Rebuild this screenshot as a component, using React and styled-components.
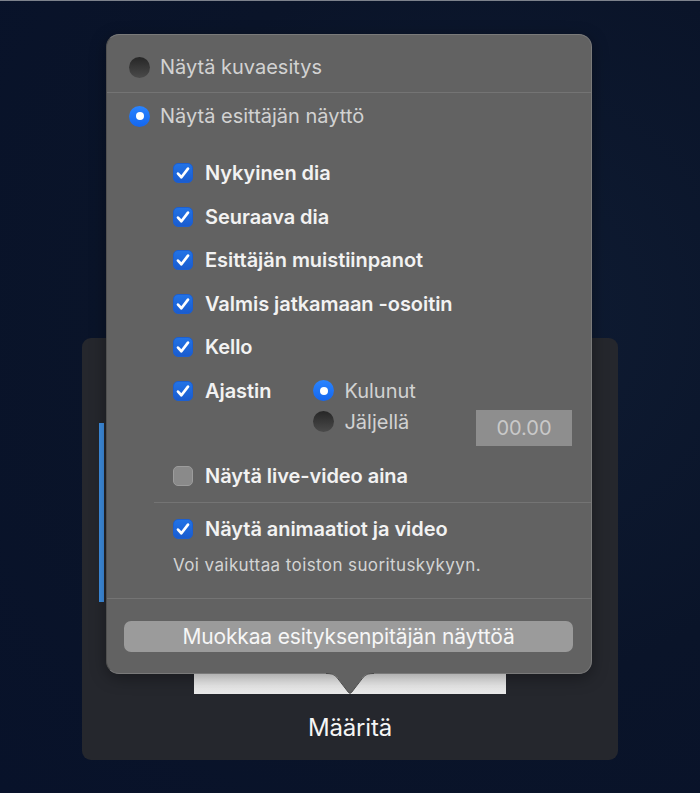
import React from "react";
import styled, { createGlobalStyle } from "styled-components";

const GlobalStyle = createGlobalStyle`
  html, body {
    margin: 0;
    padding: 0;
  }
  body {
    background: #0a1428;
    font-family: "Inter", "Liberation Sans", sans-serif;
  }
`;

const checks = [
  "Nykyinen dia",
  "Seuraava dia",
  "Esittäjän muistiinpanot",
  "Valmis jatkamaan -osoitin",
  "Kello",
];

function Radio({ on }) {
  return <RadioDot $on={on} />;
}

function Check({ on }) {
  return (
    <CheckBox $on={on}>
      {on && (
        <svg width="16" height="16" viewBox="0 0 16 16">
          <path
            d="M3 8.6 L6.4 12.2 L13 3.6"
            fill="none"
            stroke="#fff"
            strokeWidth="2.7"
            strokeLinecap="round"
            strokeLinejoin="round"
          />
        </svg>
      )}
    </CheckBox>
  );
}

function App() {
  return (
    <>
      <GlobalStyle />
      <Page>
        <BackCard>
          <Sidebar>
            <SelectBar />
          </Sidebar>
          <CardMain>
            <Thumb />
            <CardLabel>Määritä</CardLabel>
          </CardMain>
          <Sidebar />
        </BackCard>

        <Popover>
          <TopSection>
            <RadioRow>
              <Radio />
              <RadioLabel>Näytä kuvaesitys</RadioLabel>
            </RadioRow>
          </TopSection>
          <Divider />
          <PresenterSection>
            <RadioRow>
              <Radio on />
              <RadioLabel>Näytä esittäjän näyttö</RadioLabel>
            </RadioRow>
            <CheckList>
              {checks.map((label) => (
                <CheckRow key={label}>
                  <Check on />
                  <CheckLabel>{label}</CheckLabel>
                </CheckRow>
              ))}
              <TimerRow>
                <CheckRow>
                  <Check on />
                  <CheckLabel>Ajastin</CheckLabel>
                </CheckRow>
                <TimerChoices>
                  <RadioRow>
                    <Radio on />
                    <RadioLabel>Kulunut</RadioLabel>
                  </RadioRow>
                  <RadioRow>
                    <Radio />
                    <RadioLabel>Jäljellä</RadioLabel>
                  </RadioRow>
                </TimerChoices>
                <TimeField>00.00</TimeField>
              </TimerRow>
              <CheckRow>
                <Check />
                <CheckLabel>Näytä live-video aina</CheckLabel>
              </CheckRow>
            </CheckList>
          </PresenterSection>
          <InsetDivider />
          <AnimSection>
            <CheckRow>
              <Check on />
              <CheckLabel>Näytä animaatiot ja video</CheckLabel>
            </CheckRow>
            <Note>Voi vaikuttaa toiston suorituskykyyn.</Note>
          </AnimSection>
          <Divider />
          <Footer>
            <EditButton>Muokkaa esityksenpitäjän näyttöä</EditButton>
          </Footer>
          <Arrow width="48" height="21" viewBox="0 0 48 21">
            <path
              d="M0 0 C6 0 8 1 11 4 L22.5 19.5 C23.3 20.5 24.7 20.5 25.5 19.5 L37 4 C40 1 42 0 48 0 Z"
              fill="#626262"
            />
            <path
              d="M0 0.5 C6 0.5 8 1.5 11 4.5 L22.5 19.5 C23.3 20.5 24.7 20.5 25.5 19.5 L37 4.5 C40 1.5 42 0.5 48 0.5"
              fill="none"
              stroke="#4a4a4a"
              strokeWidth="1"
            />
          </Arrow>
        </Popover>
      </Page>
    </>
  );
}

const Page = styled.div`
  position: relative;
  width: 700px;
  height: 793px;
  overflow: hidden;
  box-sizing: border-box;
  border-top: 1px solid #7d828c;
  padding: 337px 82px 0;
  background: radial-gradient(
      ellipse at 70% 40%,
      #0f1c33 0%,
      #0a1429 55%,
      #08122a 100%
    );
`;

const BackCard = styled.div`
  display: flex;
  width: 536px;
  height: 422px;
  border-radius: 9px;
  background: #25272d;
`;

const Sidebar = styled.div`
  width: 22px;
  padding: 85px 0 0 17px;
  box-sizing: border-box;
`;

const SelectBar = styled.div`
  width: 5px;
  height: 179px;
  background: #3d8de0;
`;

const CardMain = styled.div`
  flex: 1;
  display: flex;
  flex-direction: column;
  align-items: center;
  padding-top: 225px;
`;

const Thumb = styled.div`
  width: 312px;
  height: 131px;
  background: linear-gradient(#f4f4f4, #e9e9e9);
`;

const CardLabel = styled.div`
  margin-top: 20px;
  font-size: 24px;
  line-height: 28px;
  color: #f5f5f5;
  letter-spacing: -0.2px;
`;

const Popover = styled.div`
  position: absolute;
  left: 106px;
  top: 33px;
  width: 486px;
  height: 640px;
  box-sizing: border-box;
  display: flex;
  flex-direction: column;
  border-radius: 13px;
  background: #626262;
  border: 1px solid #7a7a7a;
  border-left-color: #505050;
  box-shadow: 0 4px 16px rgba(0, 0, 0, 0.35);
`;

const TopSection = styled.div`
  padding: 20px 0 0 22px;
  height: 57px;
  box-sizing: border-box;
`;

const Divider = styled.div`
  height: 1px;
  background: #747474;
`;

const InsetDivider = styled(Divider)`
  margin-left: 47px;
`;

const RadioRow = styled.div`
  display: flex;
  align-items: center;
  gap: 10px;
  height: 24px;
`;

const RadioDot = styled.span`
  position: relative;
  width: 21px;
  height: 21px;
  border-radius: 50%;
  flex-shrink: 0;
  background: ${(p) =>
    p.$on
      ? "linear-gradient(#2a84ff, #1466ee)"
      : "linear-gradient(#262626, #4a4a4a)"};
  &::after {
    content: "";
    display: ${(p) => (p.$on ? "block" : "none")};
    position: absolute;
    left: 6.5px;
    top: 6.5px;
    width: 8px;
    height: 8px;
    border-radius: 50%;
    background: #fff;
  }
`;

const RadioLabel = styled.span`
  font-size: 20px;
  line-height: 24px;
  color: #d2d2d2;
  letter-spacing: 0;
  white-space: nowrap;
`;

const PresenterSection = styled.div`
  padding: 11px 0 0 22px;
  height: 409px;
  box-sizing: border-box;
`;

const CheckList = styled.div`
  display: flex;
  flex-direction: column;
  padding: 33px 0 0 44px;
  gap: 19.5px;
`;

const CheckRow = styled.div`
  display: flex;
  align-items: center;
  gap: 12px;
  height: 24px;
`;

const CheckBox = styled.span`
  width: 20px;
  height: 20px;
  box-sizing: border-box;
  border-radius: 5px;
  flex-shrink: 0;
  display: flex;
  align-items: center;
  justify-content: center;
  background: ${(p) =>
    p.$on ? "linear-gradient(#2273e6, #1a5ccf)" : "#8a8a8a"};
  border: 1px solid ${(p) => (p.$on ? "#1c5fd0" : "#9c9c9c")};
`;

const CheckLabel = styled.span`
  font-size: 20px;
  line-height: 24px;
  font-weight: 600;
  color: #f2f2f2;
  letter-spacing: -0.05px;
  white-space: nowrap;
`;

const TimerRow = styled.div`
  display: flex;
  align-items: flex-start;
  height: 77px;
  margin-bottom: -11px;
`;

const TimerChoices = styled.div`
  display: flex;
  flex-direction: column;
  gap: 7px;
  margin-left: 42px;
`;

const TimeField = styled.div`
  margin: 31px 19px 0 auto;
  width: 96px;
  height: 36px;
  background: #8e8e8e;
  color: #c9c9c9;
  font-size: 20px;
  display: flex;
  align-items: center;
  justify-content: center;
`;

const AnimSection = styled.div`
  padding: 14px 0 0 66px;
  height: 95px;
  box-sizing: border-box;
`;

const Note = styled.div`
  margin-top: 14px;
  font-size: 17px;
  color: #d4d4d4;
  letter-spacing: 0.4px;
`;

const Footer = styled.div`
  padding: 22px 0 0 17px;
`;

const EditButton = styled.div`
  width: 449px;
  height: 31px;
  border-radius: 7px;
  background: #9b9b9b;
  color: #f6f6f6;
  font-size: 21px;
  display: flex;
  align-items: center;
  justify-content: center;
  letter-spacing: -0.15px;
`;

const Arrow = styled.svg`
  position: absolute;
  left: 219px;
  bottom: -21px;
`;

export default App;
